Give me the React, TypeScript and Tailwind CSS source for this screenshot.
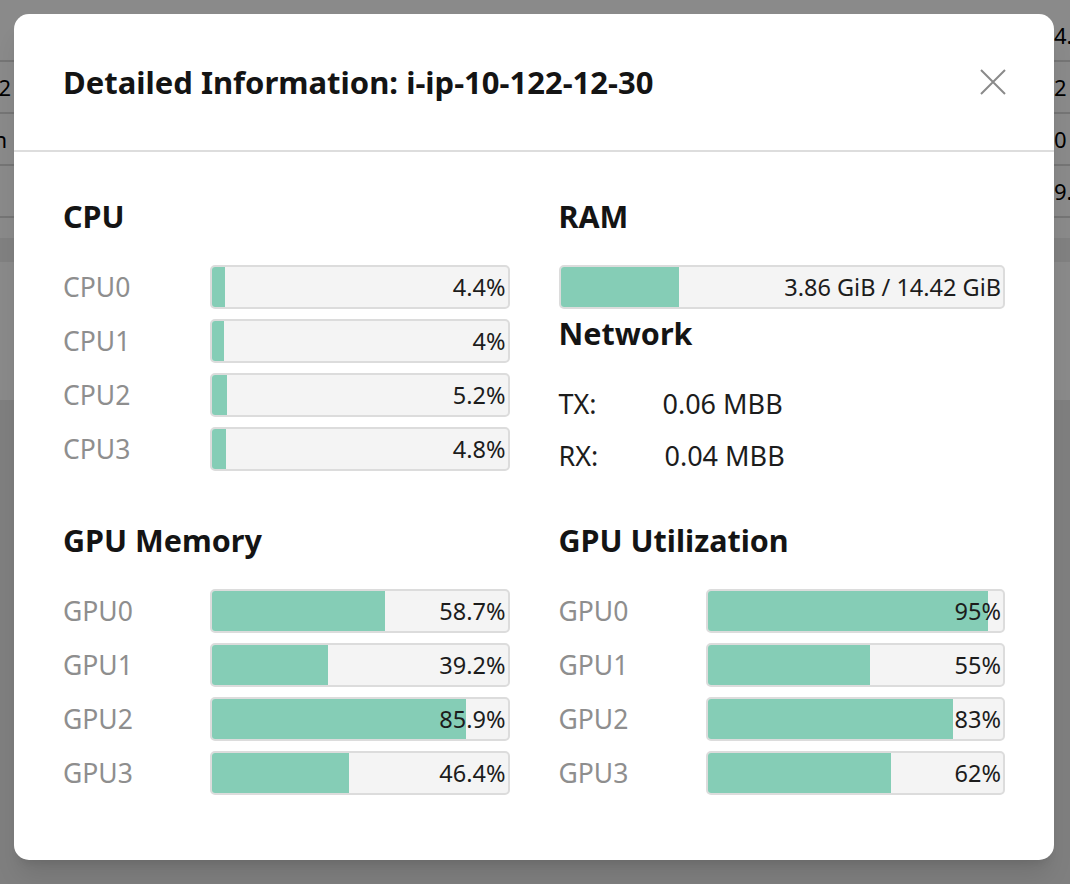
import React from 'react'

const font = { fontFamily: '"Noto Sans", "Open Sans", sans-serif' }

const cpus = [
  { name: 'CPU0', value: 4.4, label: '4.4%' },
  { name: 'CPU1', value: 4, label: '4%' },
  { name: 'CPU2', value: 5.2, label: '5.2%' },
  { name: 'CPU3', value: 4.8, label: '4.8%' },
]

const gpuMemory = [
  { name: 'GPU0', value: 58.7, label: '58.7%' },
  { name: 'GPU1', value: 39.2, label: '39.2%' },
  { name: 'GPU2', value: 85.9, label: '85.9%' },
  { name: 'GPU3', value: 46.4, label: '46.4%' },
]

const gpuUtil = [
  { name: 'GPU0', value: 95, label: '95%' },
  { name: 'GPU1', value: 55, label: '55%' },
  { name: 'GPU2', value: 83, label: '83%' },
  { name: 'GPU3', value: 62, label: '62%' },
]

function Bar({ value, label }: { value: number; label: string }) {
  return (
    <div className="relative flex-1 h-[44px] border-2 border-[#dcdcdc] rounded-[5px] bg-[#f4f4f4] overflow-hidden flex items-center justify-end pr-[2px]">
      <div className="absolute left-0 top-0 bottom-0 bg-[#85cdb6]" style={{ width: `${value}%` }} />
      <span className="relative text-[23.5px] leading-[30px] text-[#1c1c1c]">{label}</span>
    </div>
  )
}

function Section({ title, rows }: { title: string; rows: { name: string; value: number; label: string }[] }) {
  return (
    <div>
      <h3 className="text-[30.5px] leading-[31px] font-bold text-[#141414] mb-[33px]">{title}</h3>
      <div className="flex flex-col gap-[10px]">
        {rows.map((r) => (
          <div key={r.name} className="flex items-center">
            <span className="w-[147px] text-[26.5px] leading-[32px] text-[#8e8e8e]">{r.name}</span>
            <Bar value={r.value} label={r.label} />
          </div>
        ))}
      </div>
    </div>
  )
}

function Backdrop() {
  const rows = ['4.6', '2', '0', '9.1']
  return (
    <div className="h-[884px] flex flex-col">
      <div className="bg-white h-[400px] flex flex-col pt-[10px]">
        {rows.map((r, i) => (
          <div key={i} className="h-[52px] border-b-2 border-[#d8d8d8] flex items-center justify-between text-[22px] text-black">
            <span className="-ml-[14px]">{i === 1 ? '12' : i === 2 ? 'In' : ''}</span>
            <span className="mr-[-24px] w-[40px]">{r}</span>
          </div>
        ))}
        <div className="mt-[20px] h-[24px] bg-[#eeeeee]" />
      </div>
      <div className="flex-1 bg-[#ebebeb]" />
    </div>
  )
}

export default function App() {
  return (
    <div className="relative w-[1070px] h-[884px] overflow-hidden" style={font}>
      <Backdrop />
      <div className="absolute inset-0 bg-black/[0.46] pt-[14px] pl-[14px]">
        <div className="w-[1040px] h-[846px] bg-white rounded-[15px] shadow-xl flex flex-col">
          <div className="h-[138px] shrink-0 px-[49px] flex items-center justify-between border-b-2 border-[#dddddd]">
            <h2 className="text-[31px] leading-[40px] font-bold text-[#141414]">Detailed Information: i-ip-10-122-12-30</h2>
            <svg width="26" height="26" viewBox="0 0 26 26" className="mr-[-1px]">
              <path d="M1 1 L25 25 M25 1 L1 25" stroke="#8a8a8a" strokeWidth="2" />
            </svg>
          </div>
          <div className="px-[49px] pt-[49px] grid grid-cols-2 gap-x-[49px] gap-y-[54px]">
            <Section title="CPU" rows={cpus} />
            <div>
              <h3 className="text-[30.5px] leading-[31px] font-bold text-[#141414] mb-[33px]">RAM</h3>
              <Bar value={26.8} label="3.86 GiB / 14.42 GiB" />
              <h3 className="text-[30.5px] leading-[31px] font-bold text-[#141414] mt-[9px] mb-[40px]">Network</h3>
              <div className="flex flex-col gap-[22px] text-[27px] leading-[30px] text-[#1c1c1c]">
                <div className="flex"><span className="w-[104px]">TX:</span><span>0.06 MBB</span></div>
                <div className="flex"><span className="w-[106px]">RX:</span><span>0.04 MBB</span></div>
              </div>
            </div>
            <Section title="GPU Memory" rows={gpuMemory} />
            <Section title="GPU Utilization" rows={gpuUtil} />
          </div>
        </div>
      </div>
    </div>
  )
}
